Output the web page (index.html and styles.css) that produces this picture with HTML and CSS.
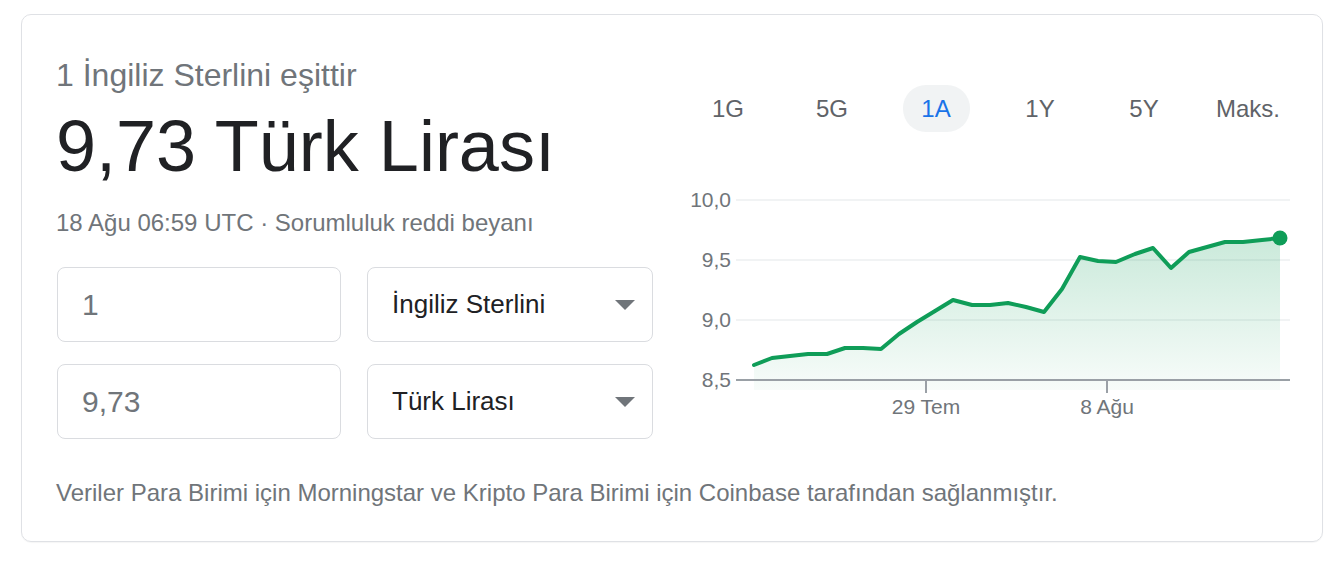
FILE: index.html
```html
<!DOCTYPE html>
<html lang="tr">
<head>
<meta charset="utf-8">
<title>Döviz çevirici</title>
<link rel="stylesheet" href="styles.css">
</head>
<body>
<div class="card">
  <div class="top">
    <div class="left">
      <div class="eq">1 İngiliz Sterlini eşittir</div>
      <div class="big">9,73 Türk Lirası</div>
      <div class="date">18 Ağu 06:59 UTC · <span class="disc">Sorumluluk reddi beyanı</span></div>
      <div class="conv">
        <div class="box inp">1</div>
        <div class="box sel"><span>İngiliz Sterlini</span><i class="arrow"></i></div>
        <div class="box inp">9,73</div>
        <div class="box sel"><span>Türk Lirası</span><i class="arrow"></i></div>
      </div>
    </div>
    <div class="right">
      <div class="tabs">
        <div class="tab"><span>1G</span></div>
        <div class="tab"><span>5G</span></div>
        <div class="tab active"><span>1A</span></div>
        <div class="tab"><span>1Y</span></div>
        <div class="tab"><span>5Y</span></div>
        <div class="tab"><span>Maks.</span></div>
      </div>
      <svg class="chart" width="624" height="250" viewBox="676 180 624 250">
        <defs>
          <linearGradient id="fillg" x1="0" y1="238" x2="0" y2="390" gradientUnits="userSpaceOnUse">
            <stop offset="0" stop-color="#0f9d58" stop-opacity="0.22"/>
            <stop offset="1" stop-color="#0f9d58" stop-opacity="0.03"/>
          </linearGradient>
        </defs>
        <g class="grid">
          <line x1="736" y1="200" x2="1290" y2="200"/>
          <line x1="736" y1="260" x2="1290" y2="260"/>
          <line x1="736" y1="320" x2="1290" y2="320"/>
        </g>
        <polygon fill="url(#fillg)" points="754,365 772,358 790,356 808,354 827,354 845,348 863,348 881,349 899,334 917,322 935,311 953,300 972,305 990,305 1008,303 1026,307 1044,312 1062,289 1080,257 1098,261 1116,262 1135,254 1153,248 1171,268 1189,252 1207,247 1225,242 1243,242 1262,240 1280,238 1280,390 754,390"/>
        <g class="axis">
          <line x1="736" y1="380" x2="1290" y2="380"/>
          <line x1="926" y1="380" x2="926" y2="393"/>
          <line x1="1107" y1="380" x2="1107" y2="393"/>
        </g>
        <polyline class="line" points="754,365 772,358 790,356 808,354 827,354 845,348 863,348 881,349 899,334 917,322 935,311 953,300 972,305 990,305 1008,303 1026,307 1044,312 1062,289 1080,257 1098,261 1116,262 1135,254 1153,248 1171,268 1189,252 1207,247 1225,242 1243,242 1262,240 1280,238"/>
        <circle cx="1280" cy="238" r="7.5" fill="#0f9d58"/>
        <g class="ylab">
          <text x="731" y="206.5">10,0</text>
          <text x="731" y="266.5">9,5</text>
          <text x="731" y="326.5">9,0</text>
          <text x="731" y="386.5">8,5</text>
        </g>
        <g class="xlab">
          <text x="926" y="414">29 Tem</text>
          <text x="1107" y="414">8 Ağu</text>
        </g>
      </svg>
    </div>
  </div>
  <div class="foot">Veriler Para Birimi için Morningstar ve Kripto Para Birimi için Coinbase tarafından sağlanmıştır.</div>
</div>
</body>
</html>
```

FILE: styles.css
```css
html, body {
  margin: 0;
  padding: 0;
  background: #ffffff;
}
body {
  font-family: "Liberation Sans", Arial, sans-serif;
  width: 1334px;
  height: 572px;
  overflow: hidden;
}
.card {
  box-sizing: border-box;
  width: 1302px;
  height: 528px;
  margin: 14px 0 0 21px;
  border: 1px solid #dfe1e5;
  border-radius: 10px;
  padding: 42px 22px 0 34px;
  box-shadow: 0 1px 1px rgba(0,0,0,0.04);
}
.top {
  display: flex;
  gap: 23px;
}
.left {
  width: 597px;
  flex: none;
}
.eq {
  font-size: 32px;
  line-height: 36px;
  color: #70757a;
}
.big {
  margin-top: 13px;
  font-size: 72px;
  line-height: 80px;
  color: #202124;
}
.date {
  margin-top: 23px;
  font-size: 24px;
  line-height: 28px;
  color: #70757a;
}
.conv {
  margin-top: 30px;
  display: grid;
  grid-template-columns: 284px 286px;
  column-gap: 26px;
  row-gap: 22px;
  margin-left: 1px;
}
.box {
  box-sizing: border-box;
  height: 75px;
  border: 1px solid #dadce0;
  border-radius: 8px;
  display: flex;
  align-items: center;
  padding-left: 24px;
}
.inp {
  font-size: 30px;
  color: #70757a;
}
.sel {
  font-size: 26px;
  color: #202124;
  justify-content: space-between;
  padding-right: 17px;
}
.arrow {
  width: 0;
  height: 0;
  border-left: 10px solid transparent;
  border-right: 10px solid transparent;
  border-top: 10px solid #70757a;
}
.right {
  width: 624px;
  flex: none;
  padding-top: 28px;
}
.tabs {
  display: grid;
  grid-template-columns: repeat(6, 104px);
  height: 47px;
}
.tab {
  display: flex;
  justify-content: center;
  align-items: center;
}
.tab span {
  display: flex;
  align-items: center;
  justify-content: center;
  width: 67px;
  height: 47px;
  border-radius: 23px;
  font-size: 24px;
  color: #5f6368;
}
.tab.active span {
  background: #f1f3f4;
  color: #1a73e8;
}
.chart {
  display: block;
  margin-top: 48px;
}
.grid line {
  stroke: #f1f3f4;
  stroke-width: 2;
}
.axis line {
  stroke: #9aa0a6;
  stroke-width: 2;
}
.line {
  fill: none;
  stroke: #0f9d58;
  stroke-width: 4;
  stroke-linejoin: round;
  stroke-linecap: round;
}
.ylab text {
  font-family: "Liberation Sans", Arial, sans-serif;
  font-size: 21px;
  fill: #70757a;
  text-anchor: end;
}
.xlab text {
  font-family: "Liberation Sans", Arial, sans-serif;
  font-size: 21px;
  fill: #70757a;
  text-anchor: middle;
}
.foot {
  margin-top: 40px;
  font-size: 24px;
  line-height: 28px;
  color: #70757a;
}
```
